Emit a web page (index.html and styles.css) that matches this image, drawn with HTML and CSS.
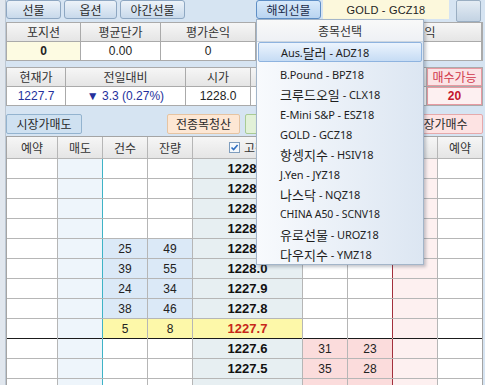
FILE: index.html
```html
<!DOCTYPE html>
<html lang="ko">
<head>
<meta charset="utf-8">
<link rel="stylesheet" href="styles.css">
</head>
<body>
<div class="screen">
  <div class="edge"></div>
  <div class="main">
    <div class="topbar">
      <div class="tab w55">선물</div>
      <div class="tab w53">옵션</div>
      <div class="tab w65">야간선물</div>
      <div class="tab w65 active push">해외선물</div>
      <div class="symbol">GOLD - GCZ18</div>
      <div class="sqbtn"></div>
    </div>

    <div class="grid pos">
      <div class="hd">포지션</div><div class="hd">평균단가</div><div class="hd">평가손익</div><div class="hd"></div><div class="hd">실현손익</div>
      <div class="cell yel bold">0</div><div class="cell">0.00</div><div class="cell">0</div><div class="cell"></div><div class="cell"></div>
    </div>

    <div class="grid quote">
      <div class="hd">현재가</div><div class="hd">전일대비</div><div class="hd">시가</div><div class="hd"></div><div class="hd"></div><div class="hd buyable">매수가능</div>
      <div class="cell blue">1227.7</div><div class="cell blue"><span class="tri">▼</span>&nbsp;3.3 (0.27%)</div><div class="cell">1228.0</div><div class="cell"></div><div class="cell"></div><div class="cell buyable-val">20</div>
    </div>

    <div class="actions">
      <div class="act sell">시장가매도</div>
      <div class="act clear">전종목청산</div>
      <div class="act cancel"></div>
      <div class="act buy">시장가매수</div>
    </div>

    <div class="grid book">
      <div class="row head">
        <div class="hd">예약</div><div class="hd">매도</div><div class="hd">건수</div><div class="hd">잔량</div>
        <div class="hd"><span class="chk"><svg width="11" height="11" viewBox="0 0 11 11"><rect x="0.5" y="0.5" width="10" height="10" fill="#f4f8fc" stroke="#7f9dbd"/><path d="M2.5 5.5 L4.6 7.6 L8.6 3" fill="none" stroke="#2f6fc0" stroke-width="1.6"/></svg></span>고정</div>
        <div class="hd"></div><div class="hd"></div><div class="hd"></div><div class="hd">예약</div>
      </div>
      <div class="row ask"><div class="c"></div><div class="c s"></div><div class="c n"></div><div class="c"></div><div class="c p">1228.5</div><div class="c"></div><div class="c"></div><div class="c b"></div><div class="c"></div></div>
      <div class="row ask"><div class="c"></div><div class="c s"></div><div class="c n"></div><div class="c"></div><div class="c p">1228.4</div><div class="c"></div><div class="c"></div><div class="c b"></div><div class="c"></div></div>
      <div class="row ask"><div class="c"></div><div class="c s"></div><div class="c n"></div><div class="c"></div><div class="c p">1228.3</div><div class="c"></div><div class="c"></div><div class="c b"></div><div class="c"></div></div>
      <div class="row ask"><div class="c"></div><div class="c s"></div><div class="c n"></div><div class="c"></div><div class="c p">1228.2</div><div class="c"></div><div class="c"></div><div class="c b"></div><div class="c"></div></div>
      <div class="row ask"><div class="c"></div><div class="c s"></div><div class="c n q">25</div><div class="c q">49</div><div class="c p">1228.1</div><div class="c"></div><div class="c"></div><div class="c b"></div><div class="c"></div></div>
      <div class="row ask"><div class="c"></div><div class="c s"></div><div class="c n q">39</div><div class="c q">55</div><div class="c p">1228.0</div><div class="c"></div><div class="c"></div><div class="c b"></div><div class="c"></div></div>
      <div class="row ask"><div class="c"></div><div class="c s"></div><div class="c n q">24</div><div class="c q">34</div><div class="c p">1227.9</div><div class="c"></div><div class="c"></div><div class="c b"></div><div class="c"></div></div>
      <div class="row ask"><div class="c"></div><div class="c s"></div><div class="c n q">38</div><div class="c q">46</div><div class="c p">1227.8</div><div class="c"></div><div class="c"></div><div class="c b"></div><div class="c"></div></div>
      <div class="row ask cur"><div class="c"></div><div class="c s"></div><div class="c n y">5</div><div class="c y">8</div><div class="c p y red">1227.7</div><div class="c"></div><div class="c"></div><div class="c b"></div><div class="c"></div></div>
      <div class="row bid first"><div class="c"></div><div class="c s"></div><div class="c n"></div><div class="c"></div><div class="c p">1227.6</div><div class="c pk">31</div><div class="c pk">23</div><div class="c b"></div><div class="c"></div></div>
      <div class="row bid"><div class="c"></div><div class="c s"></div><div class="c n"></div><div class="c"></div><div class="c p">1227.5</div><div class="c pk">35</div><div class="c pk">28</div><div class="c b"></div><div class="c"></div></div>
      <div class="row bid"><div class="c"></div><div class="c s"></div><div class="c n"></div><div class="c"></div><div class="c p"></div><div class="c pk"></div><div class="c pk"></div><div class="c b"></div><div class="c"></div></div>
    </div>
  </div>

  <div class="dropdown">
    <div class="dd-head">종목선택</div>
    <div class="dd-item sel">Aus.<span class="ko">달러</span> - ADZ18</div>
    <div class="dd-item">B.Pound - BPZ18</div>
    <div class="dd-item"><span class="ko">크루드오일</span> - CLX18</div>
    <div class="dd-item">E-Mini S&amp;P - ESZ18</div>
    <div class="dd-item">GOLD - GCZ18</div>
    <div class="dd-item"><span class="ko">항셍지수</span> - HSIV18</div>
    <div class="dd-item">J.Yen - JYZ18</div>
    <div class="dd-item"><span class="ko">나스닥</span> - NQZ18</div>
    <div class="dd-item small">CHINA A50 - SCNV18</div>
    <div class="dd-item"><span class="ko">유로선물</span> - UROZ18</div>
    <div class="dd-item"><span class="ko">다우지수</span> - YMZ18</div>
  </div>
</div>
</body>
</html>
```

FILE: styles.css
```css
* { box-sizing: border-box; }
html, body { margin: 0; padding: 0; }
body {
  width: 485px;
  height: 385px;
  overflow: hidden;
  background: #d6e4f2;
  font-family: "Noto Sans CJK KR", sans-serif;
  font-size: 12px;
  color: #222;
}
.screen { position: relative; display: flex; height: 385px; }
.edge {
  width: 6px;
  flex: none;
  background: #e1e7ee;
  border-right: 1px solid #bcc7d3;
}
.main { width: 477px; flex: none; display: flex; flex-direction: column; }

/* top bar */
.topbar { height: 24px; display: flex; align-items: flex-start; }
.tab {
  height: 19px;
  margin-right: 3px;
  border: 1px solid #8ea7c2;
  border-radius: 3px;
  background: linear-gradient(#edf3f9, #c8d9eb);
  display: flex;
  align-items: center;
  justify-content: center;
  font-size: 12px;
  line-height: 1;
  color: #2a2a2a;
}
.w55 { width: 55px; }
.w53 { width: 53px; }
.w65 { width: 65px; }
.push { margin-left: 68px; }
.tab.active {
  background: linear-gradient(#d9eafb, #b9d4f0);
  border-color: #5f8fc6;
  color: #1c2c4a;
  margin-right: 2px;
}
.symbol {
  width: 126px;
  height: 19px;
  background: #fcf8dc;
  display: flex;
  align-items: center;
  justify-content: center;
  font-family: "Liberation Sans", sans-serif;
  font-size: 11px;
  letter-spacing: 0.2px;
  color: #222;
}
.sqbtn {
  width: 25px;
  height: 22px;
  margin-left: 7px;
  border: 1px solid #9aaec2;
  border-radius: 2px;
  background: linear-gradient(#e4ecf4, #c3d3e3);
}

/* grids */
.grid { display: grid; gap: 1px; background: #aaaaaa; border: 1px solid #aaaaaa; }
.hd {
  background: linear-gradient(#f6f6f6, #e5e5e5);
  display: flex;
  align-items: center;
  justify-content: center;
  font-size: 12px;
  line-height: 1;
  color: #333;
  white-space: nowrap;
}
.cell {
  background: #ffffff;
  display: flex;
  align-items: center;
  justify-content: center;
  font-family: "Liberation Sans", sans-serif;
  font-size: 12px;
  line-height: 1;
  color: #222;
}
.bold { font-weight: bold; }
.yel { background: #fdfbe2; }
.blue { color: #23309c; }
.tri { font-size: 12px; }

.pos { grid-template-columns: 73px 79px 94px 89px 135px; grid-template-rows: 18px 18px; }
.quote { margin-top: 6px; grid-template-columns: 58px 119px 64px 87px 87px 55px; grid-template-rows: 18px 18px; }
.hd.buyable { background: #fbe4e6; color: #d0364a; box-shadow: inset 0 0 0 1px #e79aa2; }
.buyable-val { background: #fdf0f1; color: #c4162c; font-weight: bold; box-shadow: inset 0 0 0 1px #e79aa2; }

/* action buttons */
.actions { margin-top: 8px; height: 20px; display: flex; }
.act {
  height: 20px;
  border: 1px solid;
  border-radius: 2px;
  display: flex;
  align-items: center;
  justify-content: center;
  font-size: 12px;
  line-height: 1;
  color: #2a2a2a;
  white-space: nowrap;
}
.act.sell { width: 76px; background: #cfe1f1; border-color: #93b3cf; }
.act.clear { width: 73px; margin-left: 85px; background: #fde7d4; border-color: #e6c4a2; }
.act.cancel { width: 75px; margin-left: 5px; background: #e2f1d8; border-color: #a9cb94; }
.act.buy { width: 86px; margin-left: auto; background: #fde3e3; border-color: #e6a9ab; }

/* order book */
.book {
  margin-top: 2px;
  grid-template-columns: 50px 44px 44px 44px 109px 44px 44px 44px 44px;
  grid-template-rows: 21px;
  grid-auto-rows: 19px;
  background: #b6b6b6;
  border-color: #a4a4a4;
}
.row { display: contents; }
.book .hd { font-size: 12px; }
.chk { display: inline-flex; margin-right: 4px; }
.c {
  background: #ffffff;
  display: flex;
  align-items: center;
  justify-content: center;
  font-family: "Liberation Sans", sans-serif;
  font-size: 12px;
  line-height: 1;
  color: #222;
}
.c.s { background: #eef5fb; }
.c.n { box-shadow: -1px 0 0 #3eb3c6; }
.c.b { background: #fdf0f0; box-shadow: -1px 0 0 #a3303c; }
.c.q { background: #dbe9f7; }
.c.y { background: #fdf8a9; }
.c.p { background: #e7eff2; font-weight: bold; font-size: 13px; color: #111; }
.c.p.y { background: #fdf8a9; }
.c.red { color: #c8281a; }
.c.pk { background: #fbdcdc; }
.first .c { box-shadow: 0 -1px 0 #1a1a1a; }
.first .c.n { box-shadow: 0 -1px 0 #1a1a1a, -1px 0 0 #3eb3c6; }
.first .c.b { box-shadow: 0 -1px 0 #1a1a1a, -1px 0 0 #a3303c; }

/* dropdown */
.dropdown {
  position: absolute;
  left: 256px;
  top: 19px;
  width: 168px;
  height: 246px;
  border: 1px solid #a3b5c9;
  background: linear-gradient(to right, #f8fafd, #dce6f2);
  box-shadow: 2px 2px 3px rgba(60, 70, 90, 0.3);
  font-family: "Noto Sans", "Noto Sans CJK KR", sans-serif;
  font-size: 11px;
  color: #1e1e1e;
}
.dd-head {
  height: 22px;
  display: flex;
  align-items: center;
  justify-content: center;
  font-family: "Noto Sans CJK KR", sans-serif;
  font-size: 12px;
  line-height: 1;
  color: #333;
  background: linear-gradient(#f9f9f9, #eef1f5);
  border-bottom: 1px solid #cdd6e0;
}
.dd-item {
  height: 20px;
  padding-left: 23px;
  display: flex;
  align-items: center;
  line-height: 1;
  white-space: nowrap;
  letter-spacing: -0.1px;
}
.dd-item.sel {
  margin: 0 1px 2px 1px;
  padding-left: 22px;
  border: 1px solid #8eb3df;
  border-radius: 2px;
  background: linear-gradient(#ecf4fd, #c6dcf4);
}
.ko {
  font-family: "Noto Sans CJK KR", sans-serif;
  font-size: 13px;
  margin-right: 3px;
  letter-spacing: 0;
}
.dd-item.small { font-size: 10.5px; }
```
